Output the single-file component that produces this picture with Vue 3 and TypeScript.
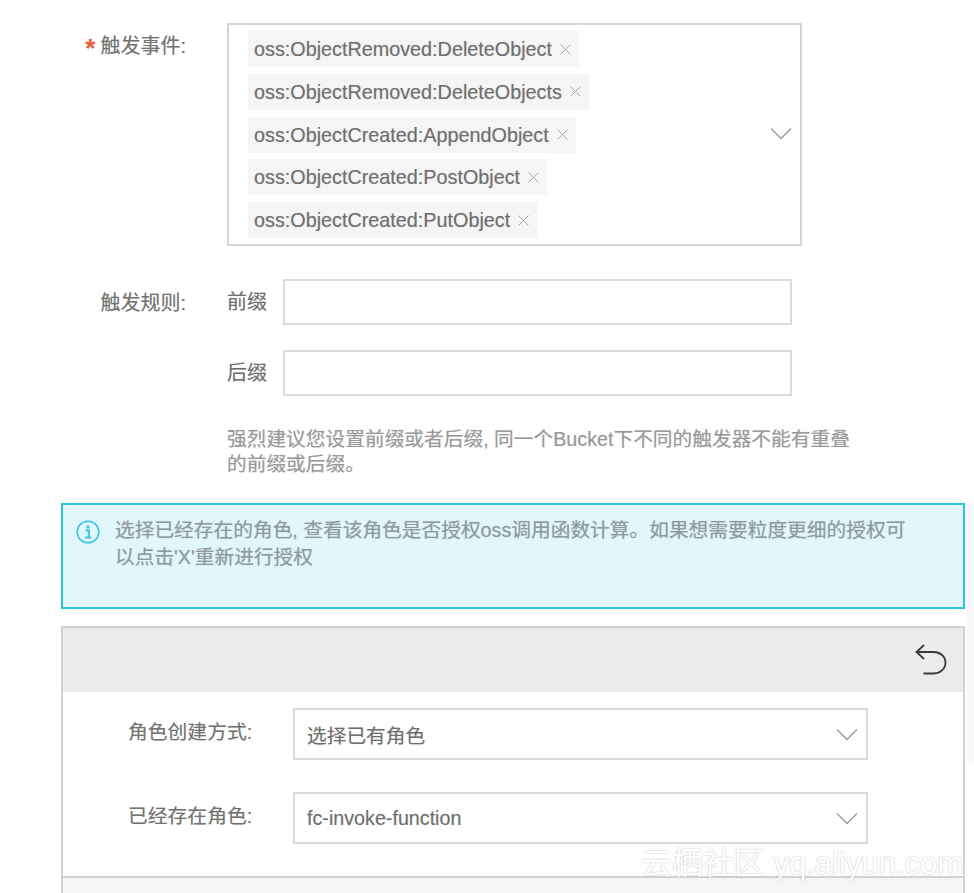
<template>
  <div class="page">
    <div class="form-row events-row">
      <label class="row-label"><span class="required">*</span>触发事件:</label>
      <div class="tag-select">
        <div class="tag-list">
          <span v-for="tag in eventTags" :key="tag" class="tag">
            {{ tag }}
            <svg class="tag-close" width="11" height="11" viewBox="0 0 11 11">
              <path d="M0.5 0.5L10.5 10.5M10.5 0.5L0.5 10.5" />
            </svg>
          </span>
        </div>
        <svg class="chevron tag-chevron" width="22" height="13" viewBox="0 0 22 13">
          <path d="M1 1.500L11 11.500L21 1.500" />
        </svg>
      </div>
    </div>

    <div class="form-row rule-row">
      <label class="row-label">触发规则:</label>
      <div class="rule-fields">
        <div class="rule-field">
          <span class="rule-name">前缀</span>
          <div class="text-input"></div>
        </div>
        <div class="rule-field">
          <span class="rule-name">后缀</span>
          <div class="text-input"></div>
        </div>
        <p class="hint">强烈建议您设置前缀或者后缀, 同一个Bucket下不同的触发器不能有重叠的前缀或后缀。</p>
      </div>
    </div>

    <div class="alert">
      <svg class="alert-icon" width="24" height="24" viewBox="0 0 24 24">
        <circle cx="12" cy="12" r="10.800" />
        <rect class="dot" x="10.400" y="5.500" width="3" height="3" />
        <path class="stem" d="M9.500 10.500H12.900V17.300M9.200 17.600H15" />
      </svg>
      <p class="alert-text">选择已经存在的角色, 查看该角色是否授权oss调用函数计算。如果想需要粒度更细的授权可以点击'X'重新进行授权</p>
    </div>

    <div class="panel">
      <div class="panel-head">
        <svg class="undo" width="32" height="32" viewBox="0 0 32 32">
          <path d="M9 1L1.500 8L9 15M1.500 8H19C25 8 30.500 12.500 30.500 18.500C30.500 25 25 29.500 19 29.500H8.500" />
        </svg>
      </div>
      <div class="panel-body">
        <div v-for="field in roleFields" :key="field.label" class="panel-row">
          <span class="panel-label">{{ field.label }}</span>
          <div class="select-box">
            <span>{{ field.value }}</span>
            <svg class="chevron" width="22" height="13" viewBox="0 0 22 13">
              <path d="M1 1.500L11 11.500L21 1.500" />
            </svg>
          </div>
        </div>
      </div>
      <div class="panel-foot"></div>
    </div>

    <div class="scroll-shade"></div>
    <div class="watermark">云栖社区 yq.aliyun.com</div>
  </div>
</template>

<script setup lang="ts">
const eventTags: string[] = [
  'oss:ObjectRemoved:DeleteObject',
  'oss:ObjectRemoved:DeleteObjects',
  'oss:ObjectCreated:AppendObject',
  'oss:ObjectCreated:PostObject',
  'oss:ObjectCreated:PutObject',
];

const roleFields = [
  { label: '角色创建方式:', value: '选择已有角色' },
  { label: '已经存在角色:', value: 'fc-invoke-function' },
];
</script>

<style>
html,
body {
  margin: 0;
  background: #fff;
}
</style>

<style scoped>
.page {
  position: relative;
  box-sizing: border-box;
  width: 974px;
  height: 893px;
  overflow: hidden;
  padding: 23px 9px 0 61px;
  background: #fff;
  color: #777;
  font-family: "Liberation Sans", "Noto Sans CJK SC", sans-serif;
  font-size: 19.800px;
  text-shadow: 0 0 1px rgba(110, 110, 110, 0.35);
}

.form-row {
  display: flex;
}

.row-label {
  box-sizing: border-box;
  width: 125px;
  flex-shrink: 0;
  text-align: right;
  font-size: 20px;
  line-height: 46px;
  color: #737373;
  white-space: nowrap;
}

.required {
  position: relative;
  top: 4px;
  margin-right: 5px;
  color: #e8603c;
  font-size: 26px;
  font-weight: bold;
  line-height: 1;
}

.tag-select {
  position: relative;
  box-sizing: border-box;
  width: 575px;
  height: 223px;
  margin-left: 41px;
  padding: 6px 0 0 19px;
  border: 2px solid #d6d6d6;
}

.tag-list {
  display: flex;
  flex-direction: column;
  align-items: flex-start;
  gap: 6.800px;
}

.tag {
  display: flex;
  align-items: center;
  height: 36px;
  padding: 0 8px 0 6px;
  background: #f5f5f5;
  color: #6f6f6f;
  line-height: 36px;
  white-space: nowrap;
}

.tag-close {
  margin-left: 8px;
  fill: none;
  stroke: #a8a8a8;
  stroke-width: 1;
}

.chevron {
  fill: none;
  stroke: #999;
  stroke-width: 1.300;
}

.tag-chevron {
  position: absolute;
  right: 8px;
  top: 102px;
}

.rule-row {
  margin-top: 33px;
}

.rule-row .row-label {
  line-height: 48px;
}

.rule-fields {
  width: 630px;
  margin-left: 41px;
}

.rule-field {
  display: flex;
  align-items: center;
  gap: 16px;
  margin-bottom: 25px;
}

.rule-name {
  font-size: 20px;
  line-height: 46px;
  white-space: nowrap;
  color: #6f6f6f;
}

.text-input {
  box-sizing: border-box;
  width: 509px;
  height: 46px;
  border: 2px solid #dcdcdc;
}

.hint {
  margin: 0;
  padding-top: 6px;
  color: #9a9a9a;
  font-size: 19.720px;
  line-height: 25px;
}

.alert {
  box-sizing: border-box;
  display: flex;
  width: 904px;
  height: 106px;
  margin-top: 26px;
  padding: 12px 50px 0 13px;
  background: #e1f7fb;
  border: 2px solid #2cc4de;
}

.alert-icon {
  flex-shrink: 0;
  margin-top: 3px;
  fill: none;
}

.alert-icon circle {
  stroke: #3cc5e2;
  stroke-width: 1.500;
}

.alert-icon .dot {
  fill: #3cc5e2;
}

.alert-icon .stem {
  stroke: #3cc5e2;
  stroke-width: 2;
}

.alert-text {
  margin: 0 0 0 15px;
  color: #8e9a9e;
  font-size: 19.700px;
  line-height: 27px;
}

.panel {
  box-sizing: border-box;
  width: 904px;
  margin-top: 17px;
  border: 2px solid #d2d2d2;
  border-bottom: none;
}

.panel-head {
  display: flex;
  justify-content: flex-end;
  align-items: center;
  height: 64px;
  padding-right: 16px;
  background: #ebebeb;
}

.undo {
  fill: none;
  stroke: #3a3a3a;
  stroke-width: 1.800;
}

.panel-body {
  display: flex;
  flex-direction: column;
  gap: 32px;
  height: 184px;
  padding-top: 16px;
  box-sizing: border-box;
}

.panel-row {
  display: flex;
  align-items: center;
}

.panel-label {
  position: relative;
  top: -4px;
  box-sizing: border-box;
  width: 230px;
  padding-left: 65px;
  font-size: 19.800px;
  color: #737373;
  white-space: nowrap;
}

.select-box {
  box-sizing: border-box;
  display: flex;
  align-items: center;
  justify-content: space-between;
  width: 575px;
  height: 52px;
  padding: 0 8px 0 12px;
  border: 2px solid #dadada;
  color: #6f6f6f;
  font-size: 19.700px;
}

.panel-foot {
  height: 60px;
  background: #f5f5f5;
  border-top: 2px solid #d2d2d2;
}

.scroll-shade {
  position: absolute;
  top: 500px;
  right: 0;
  width: 7px;
  height: 264px;
  background: #f9f9f9;
}

.watermark {
  position: absolute;
  right: 11px;
  top: 847px;
  color: #fff;
  font-size: 31px;
  line-height: 34px;
  white-space: nowrap;
  opacity: 0.95;
  text-shadow: 0 0 2px rgba(120, 120, 120, 0.5);
}
</style>
